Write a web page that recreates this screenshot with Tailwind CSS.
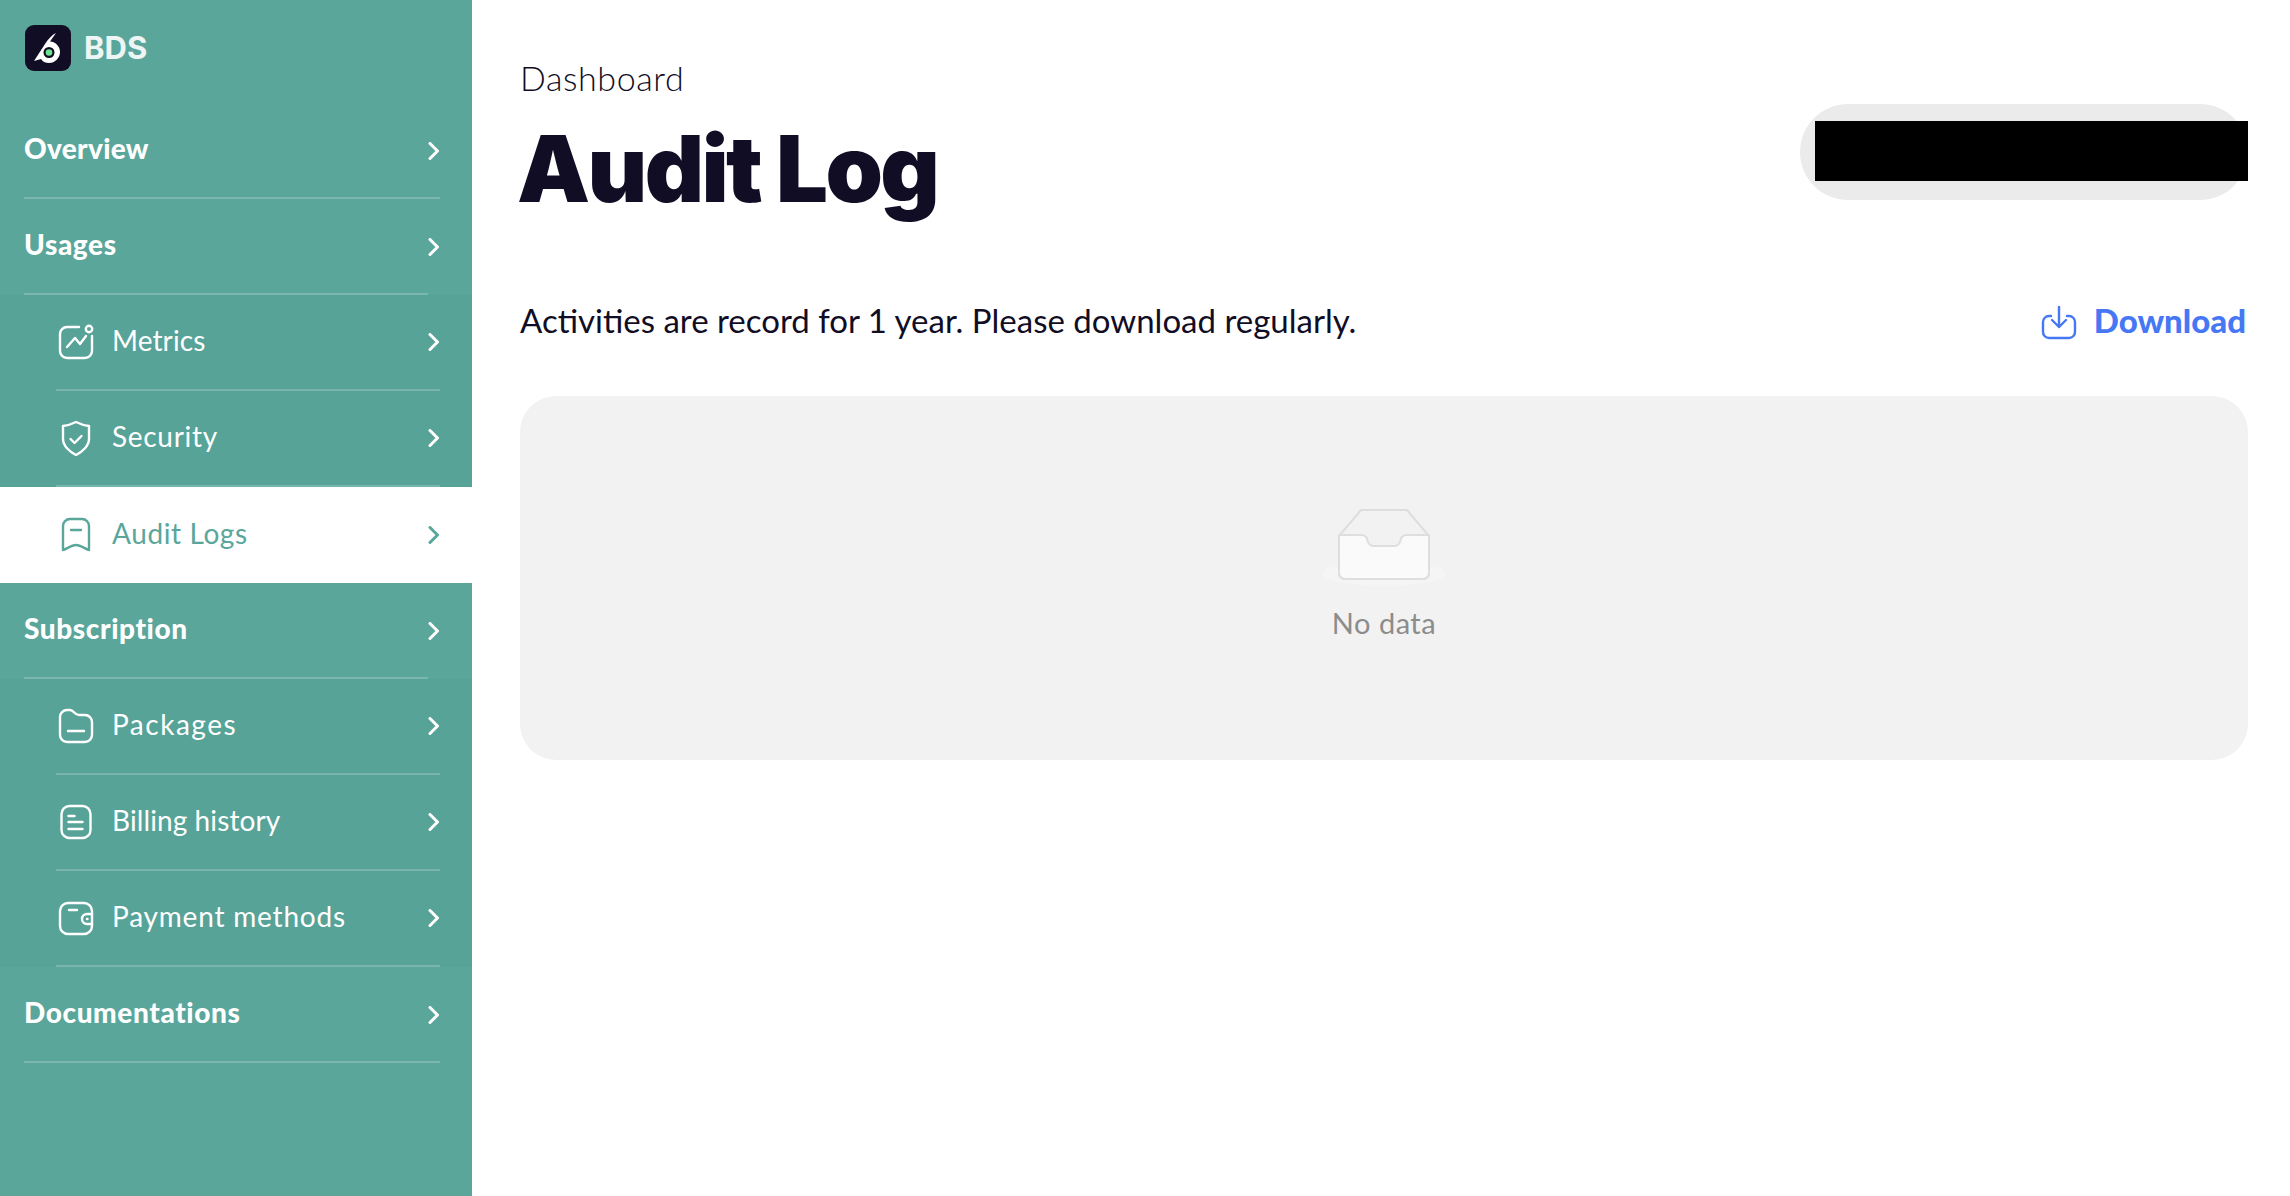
<!DOCTYPE html>
<html lang="en">

<head>
    <meta charset="UTF-8" />
    <meta name="viewport" content="width=device-width, initial-scale=1.0" />
    <title>Audit Log - BDS</title>
    <script src="https://cdn.jsdelivr.net/npm/@tailwindcss/browser@4"></script>
</head>

<body class="bg-white h-[1196px] flex overflow-hidden font-['Lato',sans-serif] text-[#110d24]">
    <!-- Sidebar -->
    <aside class="w-[472px] shrink-0 bg-[#5aa69b] pt-[25px] text-white">
        <div class="h-[46px] pl-[25px] flex items-center gap-[13px]">
            <svg class="w-[46px] h-[46px]" viewBox="0 0 46 46">
                <rect width="46" height="46" rx="9" fill="#110d24" />
                <path d="M31 8 L25 16.500 C31 17 35 21.500 35 27 C35 33 30 38 24 38 C21 38 18 37 16 34 L9 36 L20 19 C23 14 27 10 31 8Z" fill="#fff" />
                <circle cx="24" cy="27.500" r="5.500" fill="#110d24" />
                <circle cx="24" cy="27.500" r="3.300" fill="#6be38f" />
            </svg>
            <span class="font-['Inter',sans-serif] font-bold text-[31px] text-white/90 leading-none -mt-[2px]">BDS</span>
        </div>

        <nav class="mt-[32px]">
            <a class="h-[96px] pl-[24px] pr-[32px] flex items-center justify-between">
                <div class="w-full h-full flex items-center justify-between border-b-2 border-white/20">
                    <span class="font-black text-[28px] tracking-[0.3px] -mt-[5px]">Overview</span>
                    <svg class="w-[12px] h-[18px] mt-[2px]" viewBox="0 0 12 18" fill="none" stroke="currentColor" stroke-width="3" stroke-linecap="round" stroke-linejoin="round"><path d="M2 1.500l7.500 7.500-7.500 7.500" /></svg>
                </div>
            </a>
            <a class="h-[96px] pl-[24px] pr-[32px] flex items-center relative">
                <div class="w-[404px] h-full flex items-center border-b-2 border-white/20">
                    <span class="font-black text-[28px] tracking-[0.6px] -mt-[5px]">Usages</span>
                </div>
                <svg class="absolute right-[32px] top-[39px] w-[12px] h-[18px]" viewBox="0 0 12 18" fill="none" stroke="currentColor" stroke-width="3" stroke-linecap="round" stroke-linejoin="round"><path d="M2 1.500l7.500 7.500-7.500 7.500" /></svg>
            </a>

            <div class="bg-[#57a398]">
                <a class="h-[96px] ml-[56px] mr-[32px] flex items-center justify-between border-b-2 border-white/20">
                    <div class="flex items-center gap-[18px] ml-[2px]">
                        <svg class="w-[36px] h-[36px]" viewBox="0 0 36 36" fill="none" stroke="currentColor" stroke-width="2.400" stroke-linecap="round" stroke-linejoin="round">
                            <path d="M21 3H9a7 7 0 0 0-7 7v17a7 7 0 0 0 7 7h18a7 7 0 0 0 7-7V12" />
                            <circle cx="31" cy="5" r="3.200" />
                            <path d="M9 23l8-9 5 6 6-8" />
                        </svg>
                        <span class="font-normal text-[28px] tracking-[0.1px] -mt-[4px]">Metrics</span>
                    </div>
                    <svg class="w-[12px] h-[18px]" viewBox="0 0 12 18" fill="none" stroke="currentColor" stroke-width="3" stroke-linecap="round" stroke-linejoin="round"><path d="M2 1.500l7.500 7.500-7.500 7.500" /></svg>
                </a>
                <a class="h-[96px] ml-[56px] mr-[32px] flex items-center justify-between border-b-2 border-white/20">
                    <div class="flex items-center gap-[18px] ml-[2px]">
                        <svg class="w-[36px] h-[36px]" viewBox="0 0 36 36" fill="none" stroke="currentColor" stroke-width="2.400" stroke-linecap="round" stroke-linejoin="round">
                            <path d="M18 2C14 4 9 5.500 5 6v13c0 7 7 13 13 16 6-3 13-9 13-16V6C27 5.500 22 4 18 2Z" />
                            <path d="M12.500 19l4 4 7-7" />
                        </svg>
                        <span class="font-normal text-[28px] tracking-[0.7px] -mt-[4px]">Security</span>
                    </div>
                    <svg class="w-[12px] h-[18px]" viewBox="0 0 12 18" fill="none" stroke="currentColor" stroke-width="3" stroke-linecap="round" stroke-linejoin="round"><path d="M2 1.500l7.500 7.500-7.500 7.500" /></svg>
                </a>
            </div>

            <!-- Active row -->
            <a class="h-[96px] bg-white text-[#5aa69b] pl-[56px] pr-[32px] flex items-center justify-between">
                <div class="flex items-center gap-[18px] ml-[2px]">
                    <svg class="w-[36px] h-[36px]" viewBox="0 0 36 36" fill="none" stroke="currentColor" stroke-width="2.400" stroke-linecap="round" stroke-linejoin="round">
                        <path d="M5 9a7 7 0 0 1 7-7h12a7 7 0 0 1 7 7v24c-4-1-8-5-13-5S9 32 5 33Z" />
                        <path d="M13 13h10" />
                    </svg>
                    <span class="font-normal text-[28px] tracking-[0.6px] -mt-[5px]">Audit Logs</span>
                </div>
                <svg class="w-[12px] h-[18px]" viewBox="0 0 12 18" fill="none" stroke="currentColor" stroke-width="3" stroke-linecap="round" stroke-linejoin="round"><path d="M2 1.500l7.500 7.500-7.500 7.500" /></svg>
            </a>

            <a class="h-[96px] pl-[24px] pr-[32px] flex items-center relative">
                <div class="w-[404px] h-full flex items-center border-b-2 border-white/20">
                    <span class="font-black text-[28px] tracking-[0.6px] -mt-[5px]">Subscription</span>
                </div>
                <svg class="absolute right-[32px] top-[39px] w-[12px] h-[18px]" viewBox="0 0 12 18" fill="none" stroke="currentColor" stroke-width="3" stroke-linecap="round" stroke-linejoin="round"><path d="M2 1.500l7.500 7.500-7.500 7.500" /></svg>
            </a>

            <div class="bg-[#57a398]">
                <a class="h-[96px] ml-[56px] mr-[32px] flex items-center justify-between border-b-2 border-white/20">
                    <div class="flex items-center gap-[18px] ml-[2px]">
                        <svg class="w-[36px] h-[36px]" viewBox="0 0 36 36" fill="none" stroke="currentColor" stroke-width="2.400" stroke-linecap="round" stroke-linejoin="round">
                            <path d="M2 9a7 7 0 0 1 7-7h3c4 0 4 5 9 5h6a7 7 0 0 1 7 7v13a7 7 0 0 1-7 7H9a7 7 0 0 1-7-7Z" />
                            <path d="M10 23h16" />
                        </svg>
                        <span class="font-normal text-[28px] tracking-[1.5px] -mt-[5px]">Packages</span>
                    </div>
                    <svg class="w-[12px] h-[18px]" viewBox="0 0 12 18" fill="none" stroke="currentColor" stroke-width="3" stroke-linecap="round" stroke-linejoin="round"><path d="M2 1.500l7.500 7.500-7.500 7.500" /></svg>
                </a>
                <a class="h-[96px] ml-[56px] mr-[32px] flex items-center justify-between border-b-2 border-white/20">
                    <div class="flex items-center gap-[18px] ml-[2px]">
                        <svg class="w-[36px] h-[36px]" viewBox="0 0 36 36" fill="none" stroke="currentColor" stroke-width="2.400" stroke-linecap="round" stroke-linejoin="round">
                            <rect x="3.500" y="2" width="29" height="32" rx="8" />
                            <path d="M10.500 12h6M10.500 18h14M10.500 25h14" />
                        </svg>
                        <span class="font-normal text-[28px] tracking-[0.1px] -mt-[4px]">Billing history</span>
                    </div>
                    <svg class="w-[12px] h-[18px]" viewBox="0 0 12 18" fill="none" stroke="currentColor" stroke-width="3" stroke-linecap="round" stroke-linejoin="round"><path d="M2 1.500l7.500 7.500-7.500 7.500" /></svg>
                </a>
                <a class="h-[96px] ml-[56px] mr-[32px] flex items-center justify-between border-b-2 border-white/20">
                    <div class="flex items-center gap-[18px] ml-[2px]">
                        <svg class="w-[36px] h-[36px]" viewBox="0 0 36 36" fill="none" stroke="currentColor" stroke-width="2.400" stroke-linecap="round" stroke-linejoin="round">
                            <path d="M34 14v-3a8 8 0 0 0-8-8H10a8 8 0 0 0-8 8v15a8 8 0 0 0 8 8h16a8 8 0 0 0 8-8v-2" />
                            <path d="M34 14h-5a5 5 0 0 0 0 10h5Z" />
                            <path d="M11 10h8M29 19h.5" />
                        </svg>
                        <span class="font-normal text-[28px] tracking-[0.8px] -mt-[4px]">Payment methods</span>
                    </div>
                    <svg class="w-[12px] h-[18px]" viewBox="0 0 12 18" fill="none" stroke="currentColor" stroke-width="3" stroke-linecap="round" stroke-linejoin="round"><path d="M2 1.500l7.500 7.500-7.500 7.500" /></svg>
                </a>
            </div>

            <a class="h-[96px] pl-[24px] pr-[32px] flex items-center">
                <div class="w-full h-full flex items-center justify-between border-b-2 border-white/20">
                    <span class="font-black text-[28px] tracking-[0.6px] -mt-[5px]">Documentations</span>
                    <svg class="w-[12px] h-[18px] mt-[2px]" viewBox="0 0 12 18" fill="none" stroke="currentColor" stroke-width="3" stroke-linecap="round" stroke-linejoin="round"><path d="M2 1.500l7.500 7.500-7.500 7.500" /></svg>
                </div>
            </a>
        </nav>
    </aside>

    <!-- Content -->
    <main class="flex-1 pl-[48px] pr-[42px]">
        <header class="h-[396px] flex flex-col">
            <div class="flex justify-between pt-[58px]">
                <div>
                    <div class="text-[34px] leading-[40px] font-light tracking-[0.6px]">Dashboard</div>
                    <h1 class="font-['Inter',sans-serif] text-[92px] leading-[100px] font-black tracking-[-2.600px] -ml-[3px] mt-[21px]">Audit Log</h1>
                </div>
                <div class="relative w-[448px] h-[96px] mt-[46px] rounded-full bg-[#ebebeb]">
                    <!-- redacted account -->
                    <div class="absolute left-[15px] right-0 top-[17px] h-[60px] bg-black"></div>
                </div>
            </div>
            <div class="flex justify-between items-center mt-[81px] pr-[2px]">
                <p class="text-[33px] leading-[40px] font-normal">Activities are record for 1 year. Please download regularly.</p>
                <a class="flex items-center gap-[17px] text-[#4678f5] font-black text-[33px] leading-[40px]">
                    <svg class="w-[36px] h-[36px] mt-[3px]" viewBox="0 0 36 36" fill="none" stroke="currentColor" stroke-width="2.400" stroke-linecap="round" stroke-linejoin="round">
                        <path d="M18 3v20M11 16l7 7 7-7" />
                        <path d="M10 12H8a6 6 0 0 0-6 6v10a6 6 0 0 0 6 6h20a6 6 0 0 0 6-6V18a6 6 0 0 0-6-6h-2" />
                    </svg>
                    Download
                </a>
            </div>
        </header>

        <section class="h-[364px] rounded-[36px] bg-[#f2f2f2] flex flex-col items-center pt-[112px]">
            <svg class="w-[128px] h-[82px]" viewBox="0 0 128 82">
                <ellipse cx="64" cy="66" rx="62" ry="12" fill="#f5f5f5" />
                <path d="M19 28L41 2h46l22 26v37a6 6 0 0 1-6 6H25a6 6 0 0 1-6-6Z" fill="#f2f2f2" stroke="#dedede" stroke-width="2" stroke-linejoin="round" />
                <path d="M19 27h22c6 0 6 4 7 7s3 4 6 4h20c3 0 5-1 6-4s1-7 7-7h22v38a6 6 0 0 1-6 6H25a6 6 0 0 1-6-6Z" fill="#fafafa" stroke="#dedede" stroke-width="2" stroke-linejoin="round" />
            </svg>
            <div class="text-[29px] leading-[34px] text-[#8c8c8c] mt-[16px] tracking-[0.5px]">No data</div>
        </section>
    </main>
</body>

</html>
